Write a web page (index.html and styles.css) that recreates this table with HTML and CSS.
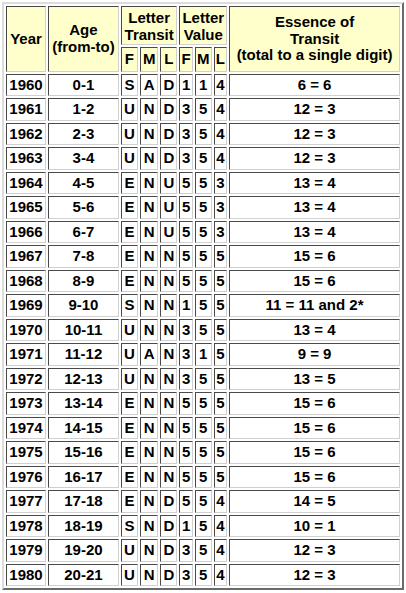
FILE: index.html
```html
<!DOCTYPE html>
<html>
<head>
<meta charset="utf-8">
<link rel="stylesheet" href="styles.css">
</head>
<body>
<table class="tbl">
  <thead>
    <tr>
      <th rowspan="2" class="c-year">Year</th>
      <th rowspan="2" class="c-age">Age<br>(from-to)</th>
      <th colspan="3" class="grp">Letter<br>Transit</th>
      <th colspan="3" class="grp">Letter<br>Value</th>
      <th rowspan="2" class="c-ess">Essence of<br>Transit<br>(total to a single digit)</th>
    </tr>
    <tr class="sub">
      <th class="l">F</th><th class="l">M</th><th class="l">L</th>
      <th class="v">F</th><th class="v">M</th><th class="v">L</th>
    </tr>
  </thead>
  <tbody>
    <tr><td>1960</td><td>0-1</td><td class="l">S</td><td class="l">A</td><td class="l">D</td><td class="v">1</td><td class="v">1</td><td class="v">4</td><td>6 = 6</td></tr>
    <tr><td>1961</td><td>1-2</td><td class="l">U</td><td class="l">N</td><td class="l">D</td><td class="v">3</td><td class="v">5</td><td class="v">4</td><td>12 = 3</td></tr>
    <tr><td>1962</td><td>2-3</td><td class="l">U</td><td class="l">N</td><td class="l">D</td><td class="v">3</td><td class="v">5</td><td class="v">4</td><td>12 = 3</td></tr>
    <tr><td>1963</td><td>3-4</td><td class="l">U</td><td class="l">N</td><td class="l">D</td><td class="v">3</td><td class="v">5</td><td class="v">4</td><td>12 = 3</td></tr>
    <tr><td>1964</td><td>4-5</td><td class="l">E</td><td class="l">N</td><td class="l">U</td><td class="v">5</td><td class="v">5</td><td class="v">3</td><td>13 = 4</td></tr>
    <tr><td>1965</td><td>5-6</td><td class="l">E</td><td class="l">N</td><td class="l">U</td><td class="v">5</td><td class="v">5</td><td class="v">3</td><td>13 = 4</td></tr>
    <tr><td>1966</td><td>6-7</td><td class="l">E</td><td class="l">N</td><td class="l">U</td><td class="v">5</td><td class="v">5</td><td class="v">3</td><td>13 = 4</td></tr>
    <tr><td>1967</td><td>7-8</td><td class="l">E</td><td class="l">N</td><td class="l">N</td><td class="v">5</td><td class="v">5</td><td class="v">5</td><td>15 = 6</td></tr>
    <tr><td>1968</td><td>8-9</td><td class="l">E</td><td class="l">N</td><td class="l">N</td><td class="v">5</td><td class="v">5</td><td class="v">5</td><td>15 = 6</td></tr>
    <tr><td>1969</td><td>9-10</td><td class="l">S</td><td class="l">N</td><td class="l">N</td><td class="v">1</td><td class="v">5</td><td class="v">5</td><td>11 = 11 and 2*</td></tr>
    <tr><td>1970</td><td>10-11</td><td class="l">U</td><td class="l">N</td><td class="l">N</td><td class="v">3</td><td class="v">5</td><td class="v">5</td><td>13 = 4</td></tr>
    <tr><td>1971</td><td>11-12</td><td class="l">U</td><td class="l">A</td><td class="l">N</td><td class="v">3</td><td class="v">1</td><td class="v">5</td><td>9 = 9</td></tr>
    <tr><td>1972</td><td>12-13</td><td class="l">U</td><td class="l">N</td><td class="l">N</td><td class="v">3</td><td class="v">5</td><td class="v">5</td><td>13 = 5</td></tr>
    <tr><td>1973</td><td>13-14</td><td class="l">E</td><td class="l">N</td><td class="l">N</td><td class="v">5</td><td class="v">5</td><td class="v">5</td><td>15 = 6</td></tr>
    <tr><td>1974</td><td>14-15</td><td class="l">E</td><td class="l">N</td><td class="l">N</td><td class="v">5</td><td class="v">5</td><td class="v">5</td><td>15 = 6</td></tr>
    <tr><td>1975</td><td>15-16</td><td class="l">E</td><td class="l">N</td><td class="l">N</td><td class="v">5</td><td class="v">5</td><td class="v">5</td><td>15 = 6</td></tr>
    <tr><td>1976</td><td>16-17</td><td class="l">E</td><td class="l">N</td><td class="l">N</td><td class="v">5</td><td class="v">5</td><td class="v">5</td><td>15 = 6</td></tr>
    <tr><td>1977</td><td>17-18</td><td class="l">E</td><td class="l">N</td><td class="l">D</td><td class="v">5</td><td class="v">5</td><td class="v">4</td><td>14 = 5</td></tr>
    <tr><td>1978</td><td>18-19</td><td class="l">S</td><td class="l">N</td><td class="l">D</td><td class="v">1</td><td class="v">5</td><td class="v">4</td><td>10 = 1</td></tr>
    <tr><td>1979</td><td>19-20</td><td class="l">U</td><td class="l">N</td><td class="l">D</td><td class="v">3</td><td class="v">5</td><td class="v">4</td><td>12 = 3</td></tr>
    <tr><td>1980</td><td>20-21</td><td class="l">U</td><td class="l">N</td><td class="l">D</td><td class="v">3</td><td class="v">5</td><td class="v">4</td><td>12 = 3</td></tr>
  </tbody>
</table>
</body>
</html>
```
FILE: styles.css
```css
html, body {
  background: #ffffff;
}
body {
  margin: 2px;
  font-family: "Liberation Sans", Arial, sans-serif;
  font-size: 15px;
  font-weight: bold;
  color: #000;
}
.tbl {
  border-collapse: separate;
  border-spacing: 2px;
  border-style: solid;
  border-width: 2px;
  border-color: #dcdcdc #6a6a6a #6a6a6a #dcdcdc;
  width: 402px;
}
.tbl th,
.tbl td {
  border-style: solid;
  border-width: 1px;
  border-color: #4a4a4a #d0d0d0 #d0d0d0 #4a4a4a;
  padding: 2px;
  line-height: 16.5px;
  text-align: center;
  vertical-align: middle;
  white-space: nowrap;
}
.tbl th {
  background: #ffffcc;
  font-weight: bold;
}
.tbl td {
  background: #ffffff;
}
.tbl .grp {
  line-height: 17px;
  padding-top: 2px;
  padding-bottom: 1px;
}
.tbl .sub th {
  padding-top: 3px;
  padding-bottom: 3px;
}
.c-year { width: 34px; }
.c-age { width: 65px; }
.c-ess { width: 165px; }
.tbl .l {
  width: 11px;
  padding-left: 2px;
  padding-right: 2px;
}
.tbl .v {
  width: 9px;
  padding-left: 1px;
  padding-right: 1px;
}
```
